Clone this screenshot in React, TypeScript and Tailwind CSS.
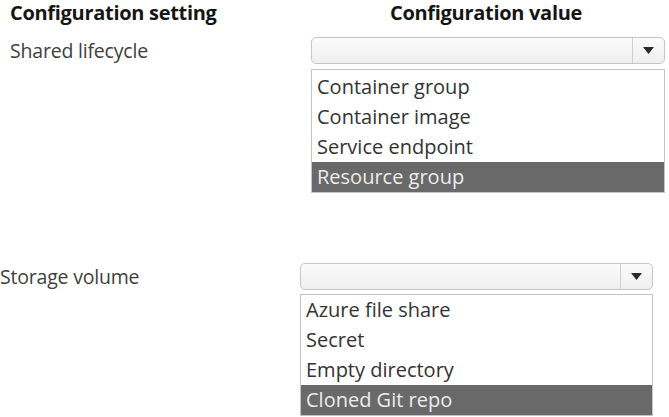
import React from "react";

const font = "font-['Open_Sans','Noto_Sans',sans-serif]";

function SelectBox() {
  return (
    <div className="flex h-[27px] rounded-[5px] border border-[#c6c6c6] bg-gradient-to-b from-[#fbfbfb] to-[#efefef]">
      <div className="flex-1" />
      <div className="flex w-[32px] items-center justify-center border-l border-[#cfcfcf]">
        <svg width="11" height="7" viewBox="0 0 11 7">
          <path d="M0 0 L11 0 L5.5 7 Z" fill="#2a2a2a" />
        </svg>
      </div>
    </div>
  );
}

function OptionList({ items, selected, className }: { items: string[]; selected: number; className: string }) {
  return (
    <div className={`border border-[#c4c4c4] bg-white ${className}`}>
      {items.map((item, i) => (
        <div
          key={item}
          className={`flex h-[30px] items-center pl-[5px] text-[20px] ${
            i === selected ? "bg-[#696969] text-[#ececec]" : "text-[#333]"
          }`}
        >
          {item}
        </div>
      ))}
    </div>
  );
}

export default function App() {
  return (
    <div className={`h-[417px] w-[669px] overflow-hidden bg-white ${font}`}>
      <div className="flex h-[26px] items-center text-[20px] font-bold tracking-[-0.3px] text-[#151515]">
        <div className="w-[390px] pl-[10px]">Configuration setting</div>
        <div>Configuration value</div>
      </div>

      <div className="mt-[11px] flex">
        <div className="flex h-[27px] w-[311px] items-center pl-[10px] text-[19.5px] tracking-[-0.2px] text-[#404040]">
          Shared lifecycle
        </div>
        <div className="w-[354px]">
          <SelectBox />
          <OptionList
            className="mt-[5px] pt-[2px]"
            selected={3}
            items={["Container group", "Container image", "Service endpoint", "Resource group"]}
          />
        </div>
      </div>

      <div className="mt-[70px] flex">
        <div className="flex h-[27px] w-[300px] items-center text-[19.5px] tracking-[-0.2px] text-[#404040]">
          Storage volume
        </div>
        <div className="w-[353px]">
          <SelectBox />
          <OptionList
            className="mt-[4px]"
            selected={3}
            items={["Azure file share", "Secret", "Empty directory", "Cloned Git repo"]}
          />
        </div>
      </div>
    </div>
  );
}
